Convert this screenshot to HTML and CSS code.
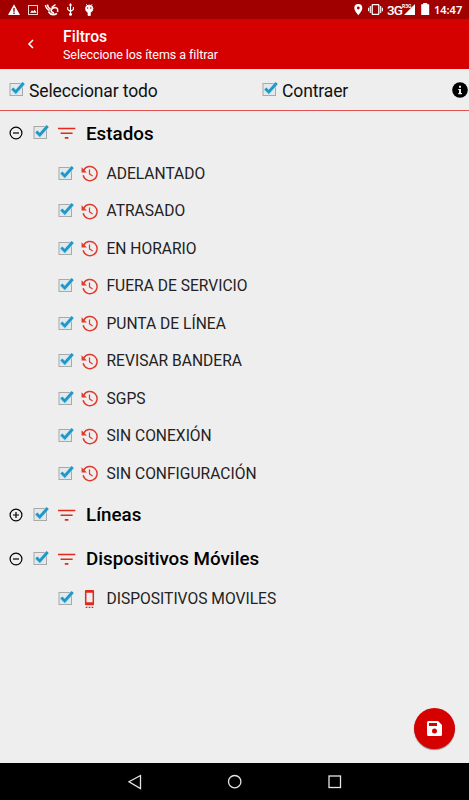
FILE: index.html
```html
<!DOCTYPE html>
<html lang="es">

<head>
    <meta charset="UTF-8">
    <meta name="viewport" content="width=device-width, initial-scale=1.0">
    <title>Filtros</title>
    <link rel="stylesheet" href="styles.css">
</head>

<body>
    <!-- shared icons -->
    <svg width="0" height="0" class="defs">
        <symbol id="check" viewBox="0 0 16 16">
            <rect x="1" y="2.5" width="12.5" height="12" fill="#e4e9ec" stroke="#a8a8a8" />
            <path d="M3.3 8l3.5 3.5 7.7-9.3" fill="none" stroke="#b5e2f4" stroke-width="4.4" opacity=".6" />
            <path d="M3.3 7.5l3.5 3.5 7.9-9" fill="none" stroke="#1f98c8" stroke-width="2.8" />
        </symbol>
        <symbol id="minus" viewBox="0 0 14 14">
            <circle cx="7" cy="7" r="5.9" fill="none" stroke="#000" stroke-width="1.2" />
            <path d="M4 7h6" stroke="#000" stroke-width="1.2" />
        </symbol>
        <symbol id="plus" viewBox="0 0 14 14">
            <circle cx="7" cy="7" r="5.9" fill="none" stroke="#000" stroke-width="1.2" />
            <path d="M4 7h6M7 4v6" stroke="#000" stroke-width="1.2" />
        </symbol>
        <symbol id="filter" viewBox="0 0 18 12">
            <path d="M0 1.5h17.3M2.6 6.2h12M6.8 10.9h3.6" stroke="#e02a1c" stroke-width="1.6" />
        </symbol>
        <symbol id="history" viewBox="0 0 24 24">
            <path d="M3.8 7.5A10 10 0 1 1 3 14.5" fill="none" stroke="#e03a2c" stroke-width="2" />
            <path d="M.8 3v7.5h7.5z" fill="#e03a2c" />
            <path d="M12 6.5v6l4.5 3.2" fill="none" stroke="#e03a2c" stroke-width="1.7" />
        </symbol>
        <symbol id="phone" viewBox="0 0 10 20">
            <path d="M1.2 0h7.6q1 0 1 1v14q0 1-1 1H1.2q-1 0-1-1V1q0-1 1-1zM1.8 3v9.8h6.4V3z" fill="#e02a1c" fill-rule="evenodd" />
            <path d="M1 18.3h1.8M4.1 18.3h1.8M7.2 18.3H9" stroke="#e02a1c" stroke-width="1.5" />
        </symbol>
    </svg>

    <div class="status-bar">
        <svg class="status-left" width="100" height="19" viewBox="0 0 100 19">
            <path d="M14 4.3L20 15H8zM13.3 8v3.7h1.4V8zM13.3 12.6V14h1.4v-1.4z" fill="#fff" fill-rule="evenodd" />
            <rect x="28.5" y="5.5" width="9" height="9" fill="none" stroke="#f3d5d5" />
            <path d="M30 12.8l2-2.5 1.3 1.2 1.4-1.8 2 3.1z" fill="#fff" />
            <path d="M45.500 5q.5 4 4 5.500M47.500 4.500q0 3 3 4.500M48.500 11.500q3 5 8.500 2M57.500 12q1-4.500-2.500-4.500-3.500.5-4 3 .5 2 3 2.500M51.500 7.500l4-3" fill="none" stroke="#fff" stroke-width="1.500" />
            <path d="M70.5 4.5v9M67.7 7v2.5l2.8 2 2.9-2V7" fill="none" stroke="#fff" stroke-width="1.1" />
            <path d="M70.5 3l1.7 2.4h-3.4z" fill="#fff" />
            <circle cx="70.5" cy="14.2" r="1.5" fill="#fff" />
            <path d="M85.5 8.5q0-3.5 3.7-3.5T93 8.5q0 3-2.6 4v3H88v-3q-2.5-1-2.5-4zM86 4l2 2M92.4 4l-2 2" fill="#fff" stroke="#fff" stroke-width=".7" />
            <circle cx="87.6" cy="8" r=".7" fill="#a60000" />
            <circle cx="90.8" cy="8" r=".7" fill="#a60000" />
        </svg>
        <div class="status-right">
            <svg width="40" height="19" viewBox="0 0 40 19">
                <path d="M8.3 4a4 4 0 0 1 4 4q0 2.7-4 7.3Q4.3 10.700 4.3 8a4 4 0 0 1 4-4zm0 2.600a1.4 1.4 0 1 0 0 2.800 1.4 1.4 0 0 0 0-2.800z" fill="#fff" />
                <rect x="22.2" y="4.7" width="6.6" height="9.6" rx=".6" fill="none" stroke="#fff" stroke-width="1.3" />
                <path d="M20.3 6v7M18.6 7.7v3.6M30.7 6v7M32.4 7.7v3.6" stroke="#fff" stroke-width="1.1" />
            </svg>
            <span class="network">3G</span>
            <span class="roaming">R3G</span>
            <svg width="34" height="19" viewBox="0 0 34 19">
                <path d="M13 4v11H2z" fill="#fff" />
                <path d="M19.2 4.2h2V3h4v1.200h2V15h-8z" fill="#fff" />
            </svg>
            <span class="clock">14:47</span>
        </div>
    </div>

    <header class="app-bar">
        <svg class="back" width="8" height="10" viewBox="0 0 8 10">
            <path d="M6 1L2 5l4 4" fill="none" stroke="#fff" stroke-width="1.6" />
        </svg>
        <div class="titles">
            <h1>Filtros</h1>
            <p>Seleccione los ítems a filtrar</p>
        </div>
    </header>

    <div class="toolbar">
        <label class="all"><svg class="check"><use href="#check" /></svg><span>Seleccionar todo</span></label>
        <label class="collapse"><svg class="check"><use href="#check" /></svg><span>Contraer</span></label>
        <svg class="info" width="16" height="16" viewBox="0 0 16 16">
            <circle cx="8" cy="8" r="7.8" fill="#000" />
            <path d="M7 3.7h2v2H7zM6.2 6.9H9v4.2h1v1.2H6.2v-1.2H7V8.1h-.8z" fill="#eee" />
        </svg>
    </div>

    <main class="tree">
        <div class="group">
            <svg class="toggle"><use href="#minus" /></svg>
            <svg class="check"><use href="#check" /></svg>
            <svg class="filter"><use href="#filter" /></svg>
            <h2>Estados</h2>
        </div>
        <ul>
            <li><svg class="check"><use href="#check" /></svg><svg class="icon"><use href="#history" /></svg><span>ADELANTADO</span></li>
            <li><svg class="check"><use href="#check" /></svg><svg class="icon"><use href="#history" /></svg><span>ATRASADO</span></li>
            <li><svg class="check"><use href="#check" /></svg><svg class="icon"><use href="#history" /></svg><span>EN HORARIO</span></li>
            <li><svg class="check"><use href="#check" /></svg><svg class="icon"><use href="#history" /></svg><span>FUERA DE SERVICIO</span></li>
            <li><svg class="check"><use href="#check" /></svg><svg class="icon"><use href="#history" /></svg><span>PUNTA DE LÍNEA</span></li>
            <li><svg class="check"><use href="#check" /></svg><svg class="icon"><use href="#history" /></svg><span>REVISAR BANDERA</span></li>
            <li><svg class="check"><use href="#check" /></svg><svg class="icon"><use href="#history" /></svg><span>SGPS</span></li>
            <li><svg class="check"><use href="#check" /></svg><svg class="icon"><use href="#history" /></svg><span>SIN CONEXIÓN</span></li>
            <li><svg class="check"><use href="#check" /></svg><svg class="icon"><use href="#history" /></svg><span>SIN CONFIGURACIÓN</span></li>
        </ul>
        <div class="group">
            <svg class="toggle"><use href="#plus" /></svg>
            <svg class="check"><use href="#check" /></svg>
            <svg class="filter"><use href="#filter" /></svg>
            <h2>Líneas</h2>
        </div>
        <div class="group">
            <svg class="toggle"><use href="#minus" /></svg>
            <svg class="check"><use href="#check" /></svg>
            <svg class="filter"><use href="#filter" /></svg>
            <h2>Dispositivos Móviles</h2>
        </div>
        <ul>
            <li><svg class="check"><use href="#check" /></svg><svg class="icon"><use href="#phone" /></svg><span>DISPOSITIVOS MOVILES</span></li>
        </ul>
    </main>

    <button class="save" aria-label="Guardar">
        <svg width="15" height="15" viewBox="0 0 15 15">
            <path d="M1.5 0H11l4 4v9.5q0 1.5-1.5 1.5h-12Q0 15 0 13.5v-12Q0 0 1.5 0zM2 2v3h8V2zm5.5 5.5a2.5 2.5 0 1 0 0 5 2.5 2.5 0 0 0 0-5z" fill="#fff" fill-rule="evenodd" />
        </svg>
    </button>

    <nav class="nav-bar">
        <svg width="16" height="16" viewBox="0 0 16 16"><path d="M13.5 1.5v13L2 7.8z" /></svg>
        <svg width="16" height="16" viewBox="0 0 16 16"><circle cx="7.7" cy="7.7" r="6.2" /></svg>
        <svg width="16" height="16" viewBox="0 0 16 16"><rect x="2" y="2" width="11.5" height="11.5" /></svg>
    </nav>
</body>

</html>
```
FILE: styles.css
```css
body {
    margin: 0;
    height: 800px;
    display: flex;
    flex-direction: column;
    position: relative;
    overflow: hidden;
    background-color: #eeeeee;
    color: #000;
    font-family: Roboto, sans-serif;
}

svg {
    display: block;
    flex-shrink: 0;
}

.defs {
    position: absolute;
}

.status-bar {
    height: 19px;
    display: flex;
    justify-content: space-between;
    background-color: #a00000;
    color: #fff;
}

.status-right {
    display: flex;
    align-items: center;
    width: 119px;
}

.status-right svg {
    margin-right: -3px;
}

.network {
    font-size: 13.5px;
    font-weight: 500;
    letter-spacing: -1px;
    width: 15px;
}

.roaming {
    font-size: 5px;
    font-weight: bold;
    align-self: flex-start;
    margin-top: 3px;
    width: 10px;
    margin-right: -10px;
}

.clock {
    font-family: "Noto Sans", sans-serif;
    font-size: 11px;
    font-weight: 600;
    margin-left: 1px;
}

.app-bar {
    height: 50px;
    display: flex;
    align-items: center;
    background-color: #d50000;
    color: #fff;
}

.back {
    margin-left: 27px;
    margin-right: 28px;
}

.titles {
    padding-top: 2px;
}

.titles h1 {
    margin: 0;
    font-size: 15.7px;
    font-weight: 500;
    line-height: 19px;
}

.titles p {
    margin: 0;
    font-size: 12.5px;
    line-height: 18px;
    letter-spacing: -0.07px;
}

.toolbar {
    height: 41px;
    margin-bottom: 1px;
    display: flex;
    align-items: center;
    box-shadow: 0 1px 0 #e05050;
    padding: 0 1px 0 9px;
    font-size: 17.5px;
    letter-spacing: -0.12px;
    color: #111;
}

.toolbar label {
    display: flex;
    align-items: center;
}

.toolbar span {
    margin-left: 4px;
    padding-top: 2px;
}

.all {
    width: 253px;
}

.info {
    margin-left: auto;
}

.check {
    width: 16px;
    height: 16px;
    margin-bottom: 2px;
}

.group {
    height: 44px;
    display: flex;
    align-items: center;
    padding-left: 9px;
}

.group h2 {
    margin: 1px 0 0 10px;
    font-size: 18.8px;
    font-weight: 500;
}

.toggle {
    width: 14px;
    height: 14px;
    margin-right: 10px;
}

.filter {
    width: 18px;
    height: 12px;
    margin-left: 9px;
}

.tree ul {
    list-style: none;
    margin: 0;
    padding: 0;
}

.tree li {
    height: 37.5px;
    display: flex;
    align-items: center;
    padding-left: 58px;
    font-size: 15.6px;
    color: #222;
}

.icon {
    width: 17px;
    height: 19px;
    margin-left: 6.5px;
    margin-right: 9px;
}

.save {
    position: absolute;
    right: 14px;
    bottom: 51px;
    width: 41px;
    height: 41px;
    display: flex;
    align-items: center;
    justify-content: center;
    border: none;
    border-radius: 50%;
    background-color: #d50000;
    box-shadow: 0 1px 1px rgba(0, 0, 0, 0.45);
}

.nav-bar {
    height: 37px;
    margin-top: auto;
    display: flex;
    align-items: center;
    justify-content: center;
    gap: 84px;
    background-color: #000;
}

.nav-bar svg {
    fill: none;
    stroke: #e6e6e6;
    stroke-width: 1.3;
}
```
